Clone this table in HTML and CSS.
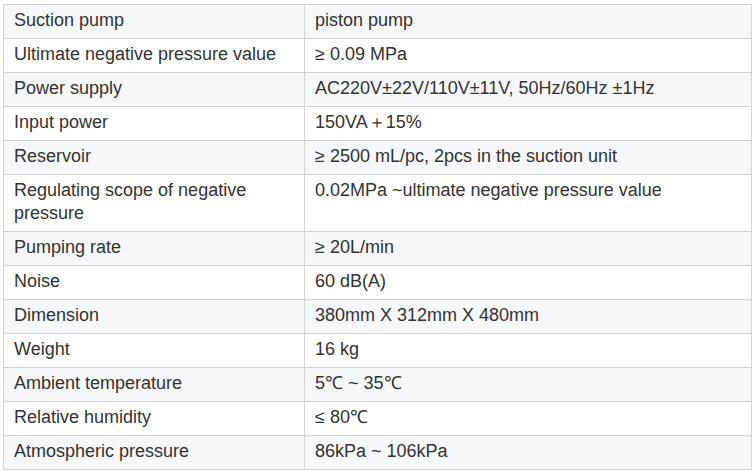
FILE: index.html
```html
<!DOCTYPE html>
<html>
<head>
<meta charset="utf-8">
<link rel="stylesheet" href="styles.css">
</head>
<body>
<div class="wrap">
<table class="spec">
<tbody>
<tr><td class="k">Suction pump</td><td>piston pump</td></tr>
<tr><td class="k">Ultimate negative pressure value</td><td>≥ 0.09 MPa</td></tr>
<tr><td class="k">Power supply</td><td>AC220V±22V/110V±11V, 50Hz/60Hz ±1Hz</td></tr>
<tr><td class="k">Input power</td><td>150VA＋15%</td></tr>
<tr><td class="k">Reservoir</td><td>≥ 2500 mL/pc, 2pcs in the suction unit</td></tr>
<tr><td class="k">Regulating scope of negative pressure</td><td>0.02MPa ~ultimate negative pressure value</td></tr>
<tr><td class="k">Pumping rate</td><td>≥ 20L/min</td></tr>
<tr><td class="k">Noise</td><td>60 dB(A)</td></tr>
<tr><td class="k">Dimension</td><td>380mm X 312mm X 480mm</td></tr>
<tr><td class="k">Weight</td><td>16 kg</td></tr>
<tr><td class="k">Ambient temperature</td><td>5℃ ~ 35℃</td></tr>
<tr><td class="k">Relative humidity</td><td>≤ 80℃</td></tr>
<tr><td class="k">Atmospheric pressure</td><td>86kPa ~ 106kPa</td></tr>
</tbody>
</table>
</div>
</body>
</html>
```
FILE: styles.css
```css
html, body {
  margin: 0;
  padding: 0;
  background: #ffffff;
}
.wrap {
  padding: 4px 0 0 3px;
}
.spec {
  border-collapse: collapse;
  width: 749px;
  table-layout: fixed;
  font-family: "Liberation Sans", Arial, sans-serif;
  font-size: 18px;
  line-height: 23px;
  color: #333333;
}
.spec td {
  border: 1px solid #d3d3d3;
  padding: 4px 10px 6px;
  vertical-align: top;
  text-align: left;
}
.spec td.k {
  width: 280px;
}
.spec tr:nth-child(odd) td {
  background: #f5f7f9;
}
```
